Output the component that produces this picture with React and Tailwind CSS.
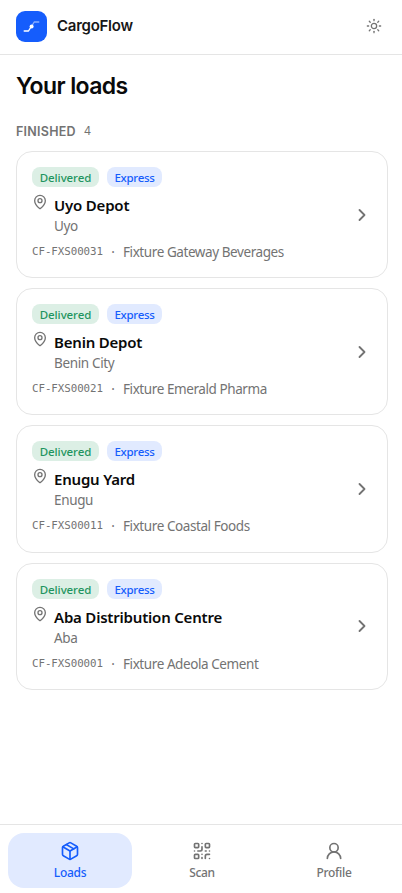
import { ChevronRight, MapPin, Package, QrCode, Sun, UserRound } from "lucide-react";

const loads = [
    { id: "CF-FXS00031", name: "Uyo Depot", city: "Uyo", client: "Fixture Gateway Beverages" },
    { id: "CF-FXS00021", name: "Benin Depot", city: "Benin City", client: "Fixture Emerald Pharma" },
    { id: "CF-FXS00011", name: "Enugu Yard", city: "Enugu", client: "Fixture Coastal Foods" },
    { id: "CF-FXS00001", name: "Aba Distribution Centre", city: "Aba", client: "Fixture Adeola Cement" },
];

const tabs = [
    { label: "Loads", icon: Package, active: true },
    { label: "Scan", icon: QrCode },
    { label: "Profile", icon: UserRound },
];

const Logo = () => (
    <div className="w-[31px] h-[31px] rounded-[9px] bg-[#155dfc] flex items-center justify-center">
        <svg width="17" height="13" viewBox="0 0 17 13" fill="none" strokeLinecap="round" strokeLinejoin="round">
            <path d="M1.2 11h4.3L8 7" stroke="white" strokeWidth="1.4" />
            <path d="M8.8 6l2.4-4h4.6" stroke="white" strokeOpacity="0.5" strokeWidth="1.3" />
            <circle cx="8.6" cy="6.4" r="2" fill="white" />
        </svg>
    </div>
);

const LoadCard = ({ load }) => (
    <a className="flex items-center h-[127.2px] rounded-2xl border border-[#e5e5e5] bg-white pl-[15px] pr-[15.5px]">
        <div className="flex-1 min-w-0">
            <div className="flex gap-2 text-[11.5px] leading-[21px] font-medium">
                <span className="w-[67px] h-[20px] text-center rounded-lg bg-[#dcefe5] text-[#1f9560] tracking-[-0.1px]">Delivered</span>
                <span className="w-[55px] h-[20px] text-center rounded-lg bg-[#e1eaff] text-[#155dfc] tracking-[-0.3px]">Express</span>
            </div>
            <div className="flex gap-[6px] mt-[7px]">
                <MapPin size={16} strokeWidth={2} className="text-[#737373] shrink-0" />
                <div>
                    <h3 className="text-[15px] leading-[22px] font-semibold text-[#0a0a0a] tracking-[-0.2px]">{load.name}</h3>
                    <p className="text-[13.5px] leading-[20px] text-[#737373] tracking-[-0.35px]">{load.city}</p>
                </div>
            </div>
            <p className="flex items-center mt-[6px] text-[13.5px] leading-[20px] text-[#737373]">
                <span className="w-[71px] font-['DejaVu_Sans_Mono',monospace] text-[10.8px] tracking-[-0.05px]">{load.id}</span>
                <span className="w-[20px] text-center">·</span>
                <span className="tracking-[-0.42px]">{load.client}</span>
            </p>
        </div>
        <ChevronRight size={20} strokeWidth={2.2} className="text-[#737373]" />
    </a>
);

const App = () => {
    return (
        <div className="w-full h-[893px] overflow-hidden bg-white">
            <div className="w-[404px] h-full flex flex-col font-['Noto_Sans',sans-serif]">
                <header className="h-[55px] shrink-0 flex items-center border-b border-[#e5e5e5] pl-[16px] pr-[22px] pb-[2px]">
                    <Logo />
                    <span className="ml-[10px] flex-1 font-['Inter',sans-serif] text-[15px] font-semibold tracking-[-0.25px] text-[#171717]">CargoFlow</span>
                    <Sun size={16} strokeWidth={1.9} className="text-[#737373]" />
                </header>

                <main className="flex-1 px-[16px]">
                    <h1 className="mt-[16px] font-['Inter',sans-serif] text-[23px] leading-[30px] font-semibold tracking-[-0.6px] text-[#0a0a0a]">Your loads</h1>
                    <h2 className="flex items-center gap-2 mt-[21px] mb-[9px] h-[20px] font-['Inter',sans-serif] text-[#737373]">
                        <span className="text-[12.5px] font-semibold tracking-[0.25px]">FINISHED</span>
                        <span className="text-[11.5px]">4</span>
                    </h2>
                    <div className="flex flex-col gap-[10px]">
                        {loads.map((load) => (
                            <LoadCard key={load.id} load={load} />
                        ))}
                    </div>
                </main>

                <nav className="h-[69px] shrink-0 flex gap-2 border-t border-[#e5e5e5] px-2 pt-2">
                    {tabs.map(({ label, icon: Icon, active }) => (
                        <button
                            key={label}
                            className={`flex-1 h-[55px] rounded-2xl flex flex-col items-center pt-[8px] gap-[3px] text-[12px] leading-[18px] font-medium
                        ${active ? "bg-[#e1eaff] text-[#155dfc]" : "text-[#737373]"}`}
                        >
                            <Icon size={20} strokeWidth={2} />
                            <span className="tracking-[-0.3px]">{label}</span>
                        </button>
                    ))}
                </nav>
            </div>
        </div>
    );
};

export default App;
